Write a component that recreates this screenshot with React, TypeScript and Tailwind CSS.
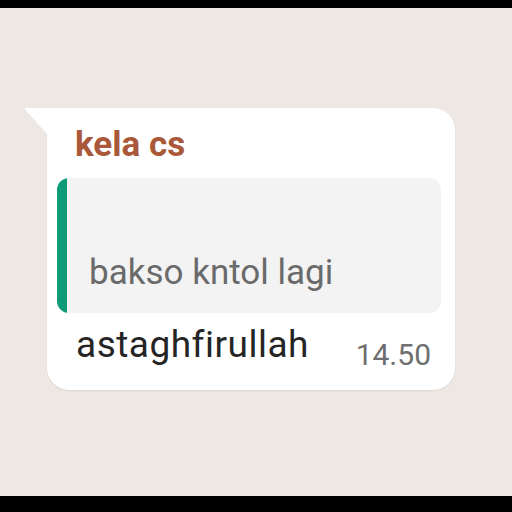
const App = () => {
  return (
    <div className="w-[512px] h-[512px] flex flex-col bg-[#eee8e4] font-['Roboto',sans-serif]">
      <div className="h-2 bg-black" />
      <div className="flex-1 pt-[100px] pl-[47px]">
        <div className="relative w-[408px] h-[282px] bg-white rounded-r-[22px] rounded-bl-[22px] shadow-[0_1px_2px_rgba(0,0,0,0.08)] pt-[17px] pl-[10px] pr-[14px]">
          <svg className="absolute left-[-22px] top-0" width="24" height="28" viewBox="0 0 24 28">
            <path d="M0 0 H24 V28 L4 6 Q0 2 0 0 Z" fill="#ffffff" />
          </svg>
          <div className="pl-[18px] text-[35px] leading-[40px] font-bold text-[#a9583a]">kela cs</div>
          <div className="mt-[13px] flex h-[135px] rounded-[12px] bg-[#f3f3f4] overflow-hidden">
            <div className="w-[10px] bg-[#0f9a78]" />
            <div className="flex-1 flex items-end pb-[20px] pl-[22px] text-[35px] leading-[40px] text-[#6a6a6a]">bakso kntol lagi</div>
          </div>
          <div className="flex items-start justify-between pl-[19px] pr-[10px]">
            <span className="mt-[10px] text-[37px] leading-[44px] tracking-[0.5px] text-[#252525]">astaghfirullah</span>
            <span className="mt-[25px] text-[30px] leading-[34px] text-[#6f6f6f]">14.50</span>
          </div>
        </div>
      </div>
      <div className="h-4 bg-black" />
    </div>
  );
};

export default App;
